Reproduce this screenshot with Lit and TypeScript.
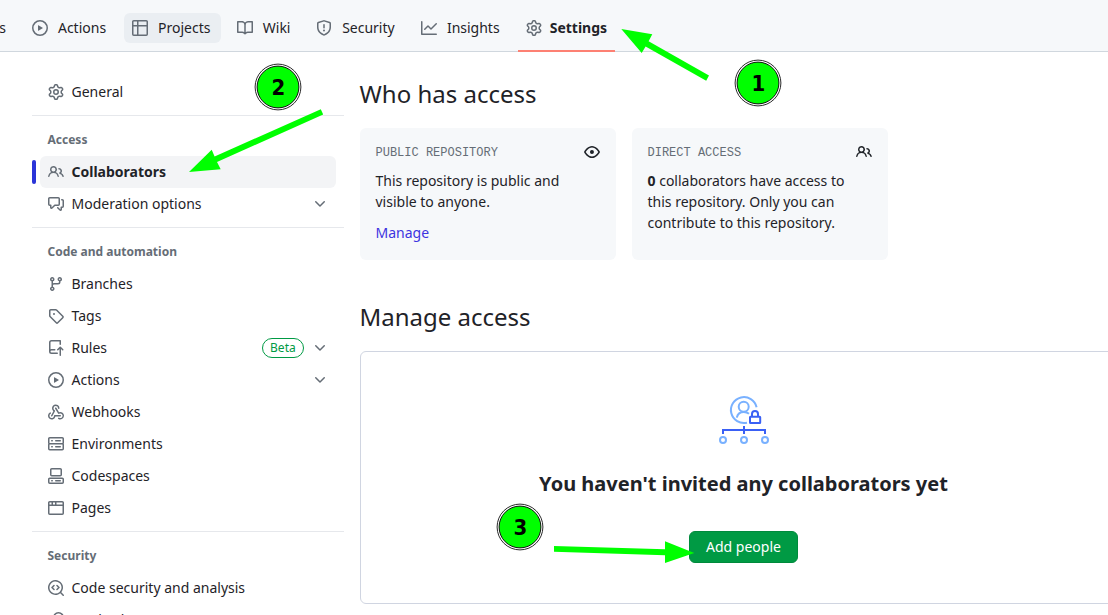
import { LitElement, html, css, svg, nothing } from "lit";
import { customElement, property } from "lit/decorators.js";

const ICONS: Record<string, string> = {
  play: "M8 0a8 8 0 1 1 0 16A8 8 0 0 1 8 0ZM1.5 8a6.5 6.5 0 1 0 13 0 6.5 6.5 0 0 0-13 0Zm4.879-2.773 4.264 2.559a.25.25 0 0 1 0 .428l-4.264 2.559A.25.25 0 0 1 6 10.559V5.442a.25.25 0 0 1 .379-.215Z",
  table: "M0 1.75C0 .784.784 0 1.75 0h12.5C15.216 0 16 .784 16 1.75v12.5A1.75 1.75 0 0 1 14.25 16H1.75A1.75 1.75 0 0 1 0 14.25ZM6.5 6.5v8h7.75a.25.25 0 0 0 .25-.25V6.5Zm8-1.5V1.75a.25.25 0 0 0-.25-.25H6.5V5Zm-13 1.5v7.75c0 .138.112.25.25.25H5v-8ZM5 5V1.5H1.75a.25.25 0 0 0-.25.25V5Z",
  book: "M0 1.75A.75.75 0 0 1 .75 1h4.253c1.227 0 2.317.59 3 1.501A3.743 3.743 0 0 1 11.006 1h4.245a.75.75 0 0 1 .75.75v10.5a.75.75 0 0 1-.75.75h-4.507a2.25 2.25 0 0 0-1.591.659l-.622.621a.75.75 0 0 1-1.06 0l-.622-.621A2.25 2.25 0 0 0 5.258 13H.75a.75.75 0 0 1-.75-.75Zm7.251 10.324.004-5.073-.002-2.253A2.25 2.25 0 0 0 5.003 2.5H1.5v9h3.757a3.75 3.75 0 0 1 1.994.574ZM8.755 4.75l-.004 7.322a3.752 3.752 0 0 1 1.992-.572H14.5v-9h-3.495a2.25 2.25 0 0 0-2.25 2.25Z",
  shield: "M7.467.133a1.748 1.748 0 0 1 1.066 0l5.25 1.68A1.75 1.75 0 0 1 15 3.48V7c0 1.566-.32 3.182-1.303 4.682-.983 1.498-2.585 2.813-5.032 3.855a1.697 1.697 0 0 1-1.33 0c-2.447-1.042-4.049-2.357-5.032-3.855C1.32 10.182 1 8.566 1 7V3.48a1.75 1.75 0 0 1 1.217-1.667Zm.61 1.429a.25.25 0 0 0-.153 0l-5.25 1.68a.25.25 0 0 0-.174.238V7c0 1.358.275 2.666 1.057 3.86.784 1.194 2.121 2.34 4.366 3.297a.196.196 0 0 0 .154 0c2.245-.956 3.582-2.104 4.366-3.298C13.225 9.666 13.5 8.36 13.5 7V3.48a.251.251 0 0 0-.174-.237l-5.25-1.68ZM8.75 4.75v3a.75.75 0 0 1-1.5 0v-3a.75.75 0 0 1 1.5 0ZM9 10.5a1 1 0 1 1-2 0 1 1 0 0 1 2 0Z",
  graph: "M1.5 1.75V13.5h13.75a.75.75 0 0 1 0 1.5H.75a.75.75 0 0 1-.75-.75V1.75a.75.75 0 0 1 1.5 0Zm14.28 2.53-5.25 5.25a.75.75 0 0 1-1.06 0L7 7.06 4.28 9.78a.751.751 0 0 1-1.042-.018.751.751 0 0 1-.018-1.042l3.25-3.25a.75.75 0 0 1 1.06 0L10 7.94l4.72-4.72a.751.751 0 0 1 1.042.018.751.751 0 0 1 .018 1.042Z",
  gear: "M8 0a8.2 8.2 0 0 1 .701.031C9.444.095 9.99.645 10.16 1.29l.288 1.107c.018.066.079.158.212.224.231.114.454.243.668.386.123.082.233.09.299.071l1.103-.303c.644-.176 1.392.021 1.82.63.27.385.506.792.704 1.218.315.675.111 1.422-.364 1.891l-.814.806c-.049.048-.098.147-.088.294.016.257.016.515 0 .772-.01.147.038.246.088.294l.814.806c.475.469.679 1.216.364 1.891a7.977 7.977 0 0 1-.704 1.217c-.428.61-1.176.807-1.82.63l-1.102-.302c-.067-.019-.177-.011-.3.071a5.909 5.909 0 0 1-.668.386c-.133.066-.194.158-.211.224l-.29 1.106c-.168.646-.715 1.196-1.458 1.26a8.006 8.006 0 0 1-1.402 0c-.743-.064-1.289-.614-1.458-1.26l-.289-1.106c-.018-.066-.079-.158-.212-.224a5.738 5.738 0 0 1-.668-.386c-.123-.082-.233-.09-.299-.071l-1.103.303c-.644.176-1.392-.021-1.82-.63a8.12 8.12 0 0 1-.704-1.218c-.315-.675-.111-1.422.363-1.891l.815-.806c.05-.048.098-.147.088-.294a6.214 6.214 0 0 1 0-.772c.01-.147-.038-.246-.088-.294l-.815-.806C.635 6.045.431 5.298.746 4.623a7.92 7.92 0 0 1 .704-1.217c.428-.61 1.176-.807 1.82-.63l1.102.302c.067.019.177.011.3-.071.214-.143.437-.272.668-.386.133-.066.194-.158.211-.224l.29-1.106C6.009.645 6.556.095 7.299.03 7.53.01 7.764 0 8 0Zm-.571 1.525c-.036.003-.108.036-.137.146l-.289 1.105c-.147.561-.549.967-.998 1.189-.173.086-.34.183-.5.29-.417.278-.97.423-1.529.27l-1.103-.303c-.109-.03-.175.016-.195.045-.22.312-.412.644-.573.99-.014.031-.021.11.059.19l.815.806c.411.406.562.957.53 1.456a4.709 4.709 0 0 0 0 .582c.032.499-.119 1.05-.53 1.456l-.815.806c-.081.08-.073.159-.059.19.162.346.353.677.573.989.02.03.085.076.195.046l1.102-.303c.56-.153 1.113-.008 1.53.27.161.107.328.204.501.29.447.222.85.629.997 1.189l.289 1.105c.029.109.101.143.137.146a6.6 6.6 0 0 0 1.142 0c.036-.003.108-.036.137-.146l.289-1.105c.147-.561.549-.967.998-1.189.173-.086.34-.183.5-.29.417-.278.97-.423 1.529-.27l1.103.303c.109.029.175-.016.195-.045.22-.313.411-.644.573-.99.014-.031.021-.11-.059-.19l-.815-.806c-.411-.406-.562-.957-.53-1.456a4.709 4.709 0 0 0 0-.582c-.032-.499.119-1.05.53-1.456l.815-.806c.081-.08.073-.159.059-.19a6.464 6.464 0 0 0-.573-.989c-.02-.03-.085-.076-.195-.046l-1.102.303c-.56.153-1.113.008-1.53-.27a4.44 4.44 0 0 0-.501-.29c-.447-.222-.85-.629-.997-1.189l-.289-1.105c-.029-.11-.101-.143-.137-.146a6.6 6.6 0 0 0-1.142 0ZM11 8a3 3 0 1 1-6 0 3 3 0 0 1 6 0ZM9.5 8a1.5 1.5 0 1 0-3.001.001A1.5 1.5 0 0 0 9.5 8Z",
  people: "M2 5.5a3.5 3.5 0 1 1 5.898 2.549 5.508 5.508 0 0 1 3.034 4.084.75.75 0 1 1-1.482.235 4 4 0 0 0-7.9 0 .75.75 0 0 1-1.482-.236A5.507 5.507 0 0 1 3.102 8.05 3.493 3.493 0 0 1 2 5.5ZM11 4a3.001 3.001 0 0 1 2.22 5.018 5.01 5.01 0 0 1 2.56 3.012.749.749 0 0 1-.885.954.752.752 0 0 1-.549-.514 3.507 3.507 0 0 0-2.522-2.372.75.75 0 0 1-.574-.73v-.352a.75.75 0 0 1 .416-.672A1.5 1.5 0 0 0 11 5.5.75.75 0 0 1 11 4Zm-5.5-.5a2 2 0 1 0-.001 3.999A2 2 0 0 0 5.5 3.5Z",
  discussion: "M1.75 1h8.5c.966 0 1.75.784 1.75 1.75v5.5A1.75 1.75 0 0 1 10.25 10H7.061l-2.574 2.573A1.458 1.458 0 0 1 2 11.543V10h-.25A1.75 1.75 0 0 1 0 8.25v-5.5C0 1.784.784 1 1.75 1ZM1.5 2.75v5.5c0 .138.112.25.25.25h1a.75.75 0 0 1 .75.75v2.19l2.72-2.72a.749.749 0 0 1 .53-.22h3.5a.25.25 0 0 0 .25-.25v-5.5a.25.25 0 0 0-.25-.25h-8.5a.25.25 0 0 0-.25.25Zm13 2a.25.25 0 0 0-.25-.25h-.5a.75.75 0 0 1 0-1.5h.5c.966 0 1.75.784 1.75 1.75v5.5A1.75 1.75 0 0 1 14.25 12H14v1.543a1.458 1.458 0 0 1-2.487 1.03L9.22 12.28a.749.749 0 0 1 .326-1.275.749.749 0 0 1 .734.215l2.22 2.22v-2.19a.75.75 0 0 1 .75-.75h1a.25.25 0 0 0 .25-.25Z",
  branch: "M9.5 3.25a2.25 2.25 0 1 1 3 2.122V6A2.5 2.5 0 0 1 10 8.5H6a1 1 0 0 0-1 1v1.128a2.251 2.251 0 1 1-1.5 0V5.372a2.25 2.25 0 1 1 1.5 0v1.836A2.493 2.493 0 0 1 6 7h4a1 1 0 0 0 1-1v-.628A2.25 2.25 0 0 1 9.5 3.25Zm-6 0a.75.75 0 1 0 1.5 0 .75.75 0 0 0-1.5 0Zm8.25-.75a.75.75 0 1 0 0 1.5.75.75 0 0 0 0-1.5ZM4.25 12a.75.75 0 1 0 0 1.5.75.75 0 0 0 0-1.5Z",
  tag: "M1 7.775V2.75C1 1.784 1.784 1 2.75 1h5.025c.464 0 .91.184 1.238.513l6.25 6.25a1.75 1.75 0 0 1 0 2.474l-5.026 5.026a1.75 1.75 0 0 1-2.474 0l-6.25-6.25A1.752 1.752 0 0 1 1 7.775Zm1.5 0c0 .066.026.13.073.177l6.25 6.25a.25.25 0 0 0 .354 0l5.025-5.025a.25.25 0 0 0 0-.354l-6.25-6.25a.25.25 0 0 0-.177-.073H2.75a.25.25 0 0 0-.25.25ZM6 5a1 1 0 1 1 0 2 1 1 0 0 1 0-2Z",
  push: "M1 2.5A2.5 2.5 0 0 1 3.5 0h8.75a.75.75 0 0 1 .75.75v3.5a.75.75 0 0 1-1.5 0V1.5h-8a1 1 0 0 0-1 1v6.708A2.493 2.493 0 0 1 3.5 9h3.25a.75.75 0 0 1 0 1.5H3.5a1 1 0 0 0 0 2h5.75a.75.75 0 0 1 0 1.5H3.5A2.5 2.5 0 0 1 1 11.5Zm13.23 7.79h-.001l-1.224-1.224v6.184a.75.75 0 0 1-1.5 0V9.066L10.28 10.29a.75.75 0 0 1-1.06-1.061l2.505-2.504a.75.75 0 0 1 1.06 0L15.29 9.23a.751.751 0 0 1-.018 1.042.751.751 0 0 1-1.042.018Z",
  webhook: "M5.5 4.25a2.25 2.25 0 0 1 4.5 0 .75.75 0 0 0 1.5 0 3.75 3.75 0 1 0-6.14 2.889l-2.272 4.258a.75.75 0 0 0 1.324.706L7 7.25a.75.75 0 0 0-.309-1.015A2.25 2.25 0 0 1 5.5 4.25Z M7.364 3.607a.75.75 0 0 1 1.03.257l2.608 4.349a3.75 3.75 0 1 1-.628 6.785.75.75 0 0 1 .752-1.299 2.25 2.25 0 1 0-.033-3.88.75.75 0 0 1-1.03-.256L7.107 4.636a.75.75 0 0 1 .257-1.03Z M2.9 8.776A.75.75 0 0 1 2.625 9.8 2.25 2.25 0 1 0 6 11.75a.75.75 0 0 1 .75-.751h5.5a.75.75 0 0 1 0 1.5H7.425a3.751 3.751 0 1 1-5.55-3.998.75.75 0 0 1 1.024.274Z",
  server: "M1.75 1h12.5c.966 0 1.75.784 1.75 1.75v4c0 .372-.116.717-.314 1 .198.283.314.628.314 1v4a1.75 1.75 0 0 1-1.75 1.75H1.75A1.75 1.75 0 0 1 0 12.75v-4c0-.358.109-.707.314-1a1.739 1.739 0 0 1-.314-1v-4C0 1.784.784 1 1.75 1ZM1.5 2.75v4c0 .138.112.25.25.25h12.5a.25.25 0 0 0 .25-.25v-4a.25.25 0 0 0-.25-.25H1.75a.25.25 0 0 0-.25.25Zm.25 5.75a.25.25 0 0 0-.25.25v4c0 .138.112.25.25.25h12.5a.25.25 0 0 0 .25-.25v-4a.25.25 0 0 0-.25-.25ZM7 4.75A.75.75 0 0 1 7.75 4h4.5a.75.75 0 0 1 0 1.5h-4.5A.75.75 0 0 1 7 4.75ZM7.75 10h4.5a.75.75 0 0 1 0 1.5h-4.5a.75.75 0 0 1 0-1.5ZM3 4.75A.75.75 0 0 1 3.75 4h.5a.75.75 0 0 1 0 1.5h-.5A.75.75 0 0 1 3 4.75ZM3.75 10h.5a.75.75 0 0 1 0 1.5h-.5a.75.75 0 0 1 0-1.5Z",
  codespaces: "M0 11.25c0-.966.784-1.75 1.75-1.75h12.5c.966 0 1.75.784 1.75 1.75v3A1.75 1.75 0 0 1 14.25 16H1.75A1.75 1.75 0 0 1 0 14.25Zm2-9.5C2 .784 2.784 0 3.75 0h8.5C13.216 0 14 .784 14 1.75v5a1.75 1.75 0 0 1-1.75 1.75h-8.5A1.75 1.75 0 0 1 2 6.75Zm1.75-.25a.25.25 0 0 0-.25.25v5c0 .138.112.25.25.25h8.5a.25.25 0 0 0 .25-.25v-5a.25.25 0 0 0-.25-.25Zm-2 9.5a.25.25 0 0 0-.25.25v3c0 .138.112.25.25.25h12.5a.25.25 0 0 0 .25-.25v-3a.25.25 0 0 0-.25-.25Z M7 12.75a.75.75 0 0 1 .75-.75h4.5a.75.75 0 0 1 0 1.5h-4.5a.75.75 0 0 1-.75-.75Zm-4 0a.75.75 0 0 1 .75-.75h.5a.75.75 0 0 1 0 1.5h-.5a.75.75 0 0 1-.75-.75Z",
  browser: "M0 2.75C0 1.784.784 1 1.75 1h12.5c.966 0 1.75.784 1.75 1.75v10.5A1.75 1.75 0 0 1 14.25 15H1.75A1.75 1.75 0 0 1 0 13.25ZM14.5 6h-13v7.25c0 .138.112.25.25.25h12.5a.25.25 0 0 0 .25-.25Zm-6-3.5v2h6V2.75a.25.25 0 0 0-.25-.25ZM5 2.5v2h2v-2Zm-3.25 0a.25.25 0 0 0-.25.25V4.5h2v-2Z",
  codescan: "M8.47 4.97a.75.75 0 0 0 0 1.06L9.94 7.5 8.47 8.97a.75.75 0 1 0 1.06 1.06l2-2a.75.75 0 0 0 0-1.06l-2-2a.75.75 0 0 0-1.06 0ZM6.53 6.03a.75.75 0 0 0-1.06-1.06l-2 2a.75.75 0 0 0 0 1.06l2 2a.75.75 0 1 0 1.06-1.06L5.06 7.5l1.47-1.47Z M12.246 13.307a7.501 7.501 0 1 1 1.06-1.06l2.474 2.473a.749.749 0 0 1-.326 1.275.749.749 0 0 1-.734-.215ZM1.5 7.5a6.002 6.002 0 0 0 3.608 5.504 6.002 6.002 0 0 0 6.486-1.117.748.748 0 0 1 .292-.293A6 6 0 1 0 1.5 7.5Z",
  key: "M10.5 0a5.499 5.499 0 1 1-1.288 10.848l-.932.932a.749.749 0 0 1-.53.22H7v.75a.749.749 0 0 1-.22.53l-.5.5a.749.749 0 0 1-.53.22H5v.75a.749.749 0 0 1-.22.53l-.5.5a.749.749 0 0 1-.53.22h-2A1.75 1.75 0 0 1 0 14.25v-2c0-.199.079-.389.22-.53l4.932-4.932A5.5 5.5 0 0 1 10.5 0Zm-4 5.5c-.001.431.069.86.205 1.269a.75.75 0 0 1-.181.768L1.5 12.56v1.69c0 .138.112.25.25.25h1.69l.06-.06v-1.19a.75.75 0 0 1 .75-.75h1.19l.06-.06v-1.19a.75.75 0 0 1 .75-.75h1.19l1.023-1.025a.75.75 0 0 1 .768-.18A4 4 0 1 0 6.5 5.5Z",
  eye: "M8 2c1.981 0 3.671.992 4.933 2.078 1.27 1.091 2.187 2.345 2.637 3.023a1.62 1.62 0 0 1 0 1.798c-.45.678-1.367 1.932-2.637 3.023C11.67 13.008 9.981 14 8 14c-1.981 0-3.671-.992-4.933-2.078C1.797 10.83.88 9.576.43 8.898a1.62 1.62 0 0 1 0-1.798c.45-.677 1.367-1.931 2.637-3.022C4.33 2.992 6.019 2 8 2ZM1.679 7.932a.12.12 0 0 0 0 .136c.411.622 1.241 1.75 2.366 2.717C5.176 11.758 6.527 12.5 8 12.5c1.473 0 2.825-.742 3.955-1.715 1.124-.967 1.954-2.096 2.366-2.717a.12.12 0 0 0 0-.136c-.412-.621-1.242-1.75-2.366-2.717C10.824 4.242 9.473 3.5 8 3.5c-1.473 0-2.825.742-3.955 1.715-1.124.967-1.954 2.096-2.366 2.717ZM8 10a2 2 0 1 1-.001-3.999A2 2 0 0 1 8 10Z",
  chevron: "M12.78 5.22a.749.749 0 0 1 0 1.06l-4.25 4.25a.749.749 0 0 1-1.06 0L3.22 6.28a.749.749 0 1 1 1.06-1.06L8 8.939l3.72-3.719a.749.749 0 0 1 1.06 0Z",
};

@customElement("oct-icon")
export class OctIcon extends LitElement {
  @property() name = "";
  static styles = css`
    :host { display: block; width: 16px; height: 16px; flex: none; }
    .glyph { display: block; fill: currentColor; }
  `;
  render() {
    return html`<svg class="glyph" width="16" height="16" viewBox="0 0 16 16"><path d=${ICONS[this.name]}></path></svg>`;
  }
}

interface Item {
  icon: string;
  label: string;
  active?: boolean;
  expandable?: boolean;
  badge?: string;
}

const TABS: Item[] = [
  { icon: "play", label: "Actions" },
  { icon: "table", label: "Projects" },
  { icon: "book", label: "Wiki" },
  { icon: "shield", label: "Security" },
  { icon: "graph", label: "Insights" },
  { icon: "gear", label: "Settings", active: true },
];

const SECTIONS: { title?: string; items: Item[] }[] = [
  { items: [{ icon: "gear", label: "General" }] },
  {
    title: "Access",
    items: [
      { icon: "people", label: "Collaborators", active: true },
      { icon: "discussion", label: "Moderation options", expandable: true },
    ],
  },
  {
    title: "Code and automation",
    items: [
      { icon: "branch", label: "Branches" },
      { icon: "tag", label: "Tags" },
      { icon: "push", label: "Rules", badge: "Beta", expandable: true },
      { icon: "play", label: "Actions", expandable: true },
      { icon: "webhook", label: "Webhooks" },
      { icon: "server", label: "Environments" },
      { icon: "codespaces", label: "Codespaces" },
      { icon: "browser", label: "Pages" },
    ],
  },
  {
    title: "Security",
    items: [
      { icon: "codescan", label: "Code security and analysis" },
      { icon: "key", label: "Deploy keys" },
    ],
  },
];

const ARROWS = [
  "621.3,29 652.3,34.3 648.6,41.2 709,75.6 706.2,80.8 645.6,46.4 641.7,53",
  "189,171.9 211.7,149.7 214.6,156.6 320.8,109.2 323.2,114.4 217,162 220.7,169.3",
  "694.3,553 665,563 665,555.2 554,551.8 554,546 665,549.3 665,541.3",
];

const STEPS = [
  { n: "1", x: 758, y: 83 },
  { n: "2", x: 278, y: 87 },
  { n: "3", x: 520, y: 527 },
];

@customElement("app-root")
export class AppRoot extends LitElement {
  static styles = css`
    :host {
      display: block;
      position: relative;
      width: 1108px;
      height: 615px;
      overflow: hidden;
      background: #fff;
      color: #1f2328;
      font: 14px/21px "Noto Sans", sans-serif;
    }
    * { box-sizing: border-box; }
    .tabs {
      display: flex;
      align-items: flex-start;
      gap: 8px;
      height: 52px;
      background: #f6f8fa;
      border-bottom: 1px solid #d0d7de;
    }
    .cut { width: 16px; height: 30px; margin-top: 13px; line-height: 29px; display: flex; justify-content: flex-end; padding-right: 10px; }
    .tab { height: 52px; padding-top: 13px; }
    .tab-in {
      display: flex;
      align-items: center;
      gap: 8px;
      height: 30px;
      padding: 0 8px;
      border-radius: 6px;
    }
    .tab-label { display: flex; flex-direction: column; align-items: center; padding-bottom: 1px; }
    .tab-label::after {
      content: attr(data-text);
      height: 0;
      overflow: hidden;
      visibility: hidden;
      font-weight: 700;
    }
    .hover { background: #eaeef2; padding-right: 9px; }
    .muted { color: #656d76; }
    .current { font-weight: 700; border-bottom: 2px solid #fd8073; }
    .body { display: flex; gap: 16px; padding-left: 32px; }
    .side { width: 312px; flex: none; padding-top: 24px; }
    .section + .section { border-top: 1px solid #e6e8ec; margin-top: 7px; }
    .title {
      height: 40px;
      padding: 7px 15.5px 0;
      display: flex;
      align-items: center;
      font-size: 12px;
      line-height: 18px;
      font-weight: 700;
      color: #656d76;
    }
    .row { display: flex; align-items: center; height: 32px; }
    .bar { width: 4px; height: 24px; border-radius: 6px; margin-right: 4px; }
    .bar.on { background: #2b35d8; }
    .link {
      width: 296px;
      height: 32px;
      padding: 0 8px;
      display: flex;
      align-items: center;
      gap: 8px;
      border-radius: 6px;
    }
    .link.on { background: #f3f4f6; font-weight: 700; }
    .label { flex: 1; margin-left: -0.5px; padding-bottom: 1px; }
    .badge {
      height: 20px;
      padding: 0 7.3px 0 6.7px;
      border: 1px solid #009a44;
      border-radius: 10px;
      color: #009a44;
      font-size: 12px;
      line-height: 18px;
    }
    .main { width: 768px; flex: none; padding-top: 24px; }
    .h2 { margin: 0 0 0 -0.5px; font-size: 24px; line-height: 36px; font-weight: 400; }
    .cards { display: flex; gap: 16px; margin-top: 16px; }
    .card {
      width: 256px;
      height: 132px;
      padding: 16px 16px 16px 15.5px;
      background: #f6f8fa;
      border-radius: 6px;
    }
    .cap {
      display: flex;
      justify-content: space-between;
      font: 12px/18px "Liberation Mono", monospace;
      color: #656d76;
      height: 16px;
      align-items: center;
    }
    .cap-text { padding-top: 2px; }
    .ink { color: #1f2328; }
    .text { margin: 10px 0 0; }
    .manage { display: block; margin-top: 10px; color: #3d34e0; text-decoration: none; }
    .second { margin-top: 39px; }
    .box {
      margin-top: 16px;
      height: 253px;
      border: 1px solid #d0d5e1;
      border-radius: 6px;
      display: flex;
      flex-direction: column;
      align-items: center;
      padding-top: 43px;
    }
    .blank { font-size: 20px; line-height: 30px; font-weight: 700; margin: 22px 1px 0 0; }
    .add {
      margin: 32px 1px 0 0;
      height: 32px;
      padding: 0 16px;
      border: 1px solid #008a3c;
      border-radius: 6px;
      background: #009a44;
      color: #fff;
      font: 400 14px/20px "Noto Sans", sans-serif;
    }
    .notes { position: absolute; left: 0; top: 0; pointer-events: none; }
    .num { font: bold 22px "DejaVu Sans Condensed", "DejaVu Sans", sans-serif; font-stretch: semi-condensed; }
  `;

  private tab(t: Item) {
    return html`<div class="tab ${t.active ? "current" : ""}">
      <div class="tab-in ${t.label === "Projects" ? "hover" : ""}">
        <oct-icon class="muted" name=${t.icon}></oct-icon><span class="tab-label" data-text=${t.label}>${t.label}</span>
      </div>
    </div>`;
  }

  private row(i: Item) {
    return html`<div class="row">
      <div class="bar ${i.active ? "on" : ""}"></div>
      <div class="link ${i.active ? "on" : ""}">
        <oct-icon class="muted" name=${i.icon}></oct-icon>
        <span class="label">${i.label}</span>
        ${i.badge ? html`<span class="badge">${i.badge}</span>` : nothing}
        ${i.expandable ? html`<oct-icon class="muted" name="chevron"></oct-icon>` : nothing}
      </div>
    </div>`;
  }

  render() {
    return html`
      <nav class="tabs"><span class="cut">Pull&nbsp;requests</span>${TABS.map((t) => this.tab(t))}</nav>
      <div class="body">
        <aside class="side">
          ${SECTIONS.map(
            (s) => html`<div class="section">
              ${s.title ? html`<div class="title">${s.title}</div>` : nothing}
              ${s.items.map((i) => this.row(i))}
            </div>`
          )}
        </aside>
        <main class="main">
          <h2 class="h2">Who has access</h2>
          <div class="cards">
            <div class="card">
              <div class="cap"><span class="cap-text">PUBLIC REPOSITORY</span><oct-icon class="ink" name="eye"></oct-icon></div>
              <p class="text">This repository is public and visible to anyone.</p>
              <a class="manage">Manage</a>
            </div>
            <div class="card">
              <div class="cap"><span class="cap-text">DIRECT ACCESS</span><oct-icon class="ink" name="people"></oct-icon></div>
              <p class="text"><b>0</b> collaborators have access to this repository. Only you can contribute to this repository.</p>
            </div>
          </div>
          <h2 class="h2 second">Manage access</h2>
          <div class="box">
            <svg width="52" height="52" viewBox="718 395 52 52" fill="none" stroke-width="2">
              <g stroke="#79b1ff">
                <path d="M756.6 407.2A13 13 0 1 0 747 422.7"></path>
                <circle cx="743.7" cy="406.8" r="5"></circle>
                <path d="M736.8 417.6C737.6 413.8 740.3 412 743.8 412C746 412 747.6 412.6 749 413.8"></path>
                <circle cx="723" cy="440" r="3"></circle>
                <circle cx="744" cy="440" r="3"></circle>
                <circle cx="765" cy="440" r="3"></circle>
              </g>
              <g stroke="#3a60f5">
                <rect x="750" y="416.8" width="10.2" height="6.2" rx=".5"></rect>
                <path d="M752 416.5V414a3 3 0 0 1 6 0V416.5M744 426V434M723 434V430H765V434"></path>
              </g>
            </svg>
            <h3 class="blank">You haven't invited any collaborators yet</h3>
            <button class="add">Add people</button>
          </div>
        </main>
      </div>
      <svg class="notes" width="1108" height="615" viewBox="0 0 1108 615">
        ${ARROWS.map((p) => svg`<polygon points=${p} fill="#0f0"></polygon>`)}
        ${STEPS.map(
          (s) => svg`
            <circle cx=${s.x} cy=${s.y} r="22.9" fill="#fff" stroke="#111" stroke-width=".9"></circle>
            <circle cx=${s.x} cy=${s.y} r="20.9" fill="#0f0" stroke="#111" stroke-width="1"></circle>
            <text class="num" x=${s.x + 0.4} y=${s.y + 8} text-anchor="middle" fill="#000">${s.n}</text>`
        )}
      </svg>
    `;
  }
}
